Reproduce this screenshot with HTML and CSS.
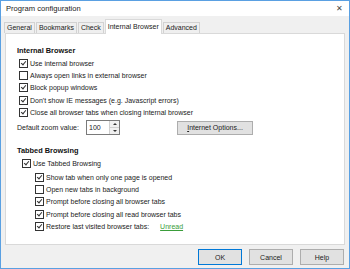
FILE: index.html
```html
<!DOCTYPE html>
<html lang="en">
<head>
    <meta charset="UTF-8">
    <title>Program configuration</title>
    <link rel="stylesheet" href="styles.css">
</head>
<body>
    <div class="window">
        <div class="titlebar">
            <span class="title">Program configuration</span>
            <span class="close">&#x2715;</span>
        </div>

        <div class="tabs">
            <span class="tab">General</span>
            <span class="tab">Bookmarks</span>
            <span class="tab">Check</span>
            <span class="tab active">Internal Browser</span>
            <span class="tab">Advanced</span>
        </div>

        <div class="panel">
            <h2>Internal Browser</h2>
            <div class="row"><span class="cb checked"></span>Use internal browser</div>
            <div class="row"><span class="cb"></span>Always open links in external browser</div>
            <div class="row"><span class="cb checked"></span>Block popup windows</div>
            <div class="row"><span class="cb checked"></span>Don't show IE messages (e.g. Javascript errors)</div>
            <div class="row"><span class="cb checked"></span>Close all browser tabs when closing internal browser</div>
            <div class="zoom-row">
                <span class="zoom-label">Default zoom value:</span>
                <span class="spin">
                    <span class="spin-value">100</span>
                    <span class="spin-btns">
                        <span class="arrow up"></span>
                        <span class="arrow down"></span>
                    </span>
                </span>
                <button class="btn options"><u>I</u>nternet Options...</button>
            </div>

            <h2 class="second">Tabbed Browsing</h2>
            <div class="row level1"><span class="cb checked"></span>Use Tabbed Browsing</div>
            <div class="sub">
                <div class="row"><span class="cb checked"></span>Show tab when only one page is opened</div>
                <div class="row"><span class="cb"></span>Open new tabs in background</div>
                <div class="row"><span class="cb checked"></span>Prompt before closing all browser tabs</div>
                <div class="row"><span class="cb checked"></span>Prompt before closing all read browser tabs</div>
                <div class="row"><span class="cb checked"></span>Restore last visited browser tabs:<a class="link">Unread</a></div>
            </div>
        </div>

        <div class="footer">
            <button class="btn default">OK</button>
            <button class="btn">Cancel</button>
            <button class="btn">Help</button>
        </div>
    </div>
</body>
</html>
```

FILE: styles.css
```css
body {
    margin: 0;
    padding: 0;
    font-family: "Liberation Sans", Arial, sans-serif;
    font-size: 7px;
    color: #1a1a1a;
}

.window {
    width: 350px;
    height: 269px;
    box-sizing: border-box;
    border: 1px solid #5aa0e2;
    background: #f0f0f0;
    display: flex;
    flex-direction: column;
}

.titlebar {
    height: 15px;
    background: #fff;
    display: flex;
    align-items: center;
    justify-content: space-between;
    padding: 0 6px 0 5px;
    flex-shrink: 0;
}

.title {
    font-size: 7.6px;
    color: #222;
}

.close {
    font-size: 8px;
    color: #444;
}

.tabs {
    display: flex;
    align-items: flex-end;
    padding: 0 0 0 3px;
    height: 17px;
    flex-shrink: 0;
    position: relative;
    z-index: 1;
}

.tab {
    height: 10px;
    line-height: 10px;
    padding: 0 2px;
    margin-right: 1px;
    border: 1px solid #d2d2d2;
    border-bottom: none;
    background: #efefef;
    color: #222;
}

.tab.active {
    height: 14px;
    line-height: 13px;
    background: #fff;
    border-color: #d9d9d9;
    margin-bottom: -1px;
}

.panel {
    margin: 0 4px;
    height: 212px;
    flex-shrink: 0;
    background: #fff;
    border: 1px solid #d9d9d9;
    padding: 11px 0 0 11px;
    box-sizing: border-box;
}

h2 {
    font-size: 7.4px;
    font-weight: bold;
    margin: 0;
    height: 12px;
    line-height: 12px;
    color: #111;
}

h2.second {
    margin-top: 9px;
}

.row {
    display: flex;
    align-items: center;
    height: 12.4px;
    padding-left: 2px;
    white-space: nowrap;
}

.cb {
    width: 7px;
    height: 7px;
    border: 1px solid #333;
    background: #fff;
    margin-right: 2px;
    position: relative;
    flex-shrink: 0;
}

.cb.checked::after {
    content: "";
    position: absolute;
    left: 2px;
    top: 0px;
    width: 2px;
    height: 4px;
    border: solid #333;
    border-width: 0 1px 1px 0;
    transform: rotate(40deg);
}

.zoom-row {
    display: flex;
    align-items: center;
    height: 16px;
    margin-top: 1px;
    white-space: nowrap;
}

.zoom-label {
    width: 69px;
    flex-shrink: 0;
}

.spin {
    display: flex;
    width: 32px;
    height: 13px;
    border: 1px solid #7a7a7a;
    background: #fff;
}

.spin-value {
    flex: 1;
    padding-left: 2px;
    line-height: 13px;
}

.spin-btns {
    width: 9px;
    display: flex;
    flex-direction: column;
    border-left: 1px solid #d0d0d0;
    background: #f0f0f0;
}

.arrow {
    flex: 1;
    display: flex;
    align-items: center;
    justify-content: center;
}

.arrow::after {
    content: "";
    border-left: 2px solid transparent;
    border-right: 2px solid transparent;
}

.arrow.up::after {
    border-bottom: 2px solid #333;
}

.arrow.down {
    border-top: 1px solid #d0d0d0;
}

.arrow.down::after {
    border-top: 2px solid #333;
}

.btn {
    font-family: inherit;
    font-size: 7px;
    color: #222;
    height: 14px;
    padding: 0;
    background: #e1e1e1;
    border: 1px solid #adadad;
}

.btn.options {
    margin-left: 57px;
    width: 76px;
}

.level1 {
    padding-left: 5px;
}

.sub {
    padding-left: 16px;
    margin-top: 2px;
}

.sub .row {
    height: 12.2px;
}

.link {
    margin-left: 11px;
    color: #3a9d3a;
    text-decoration: underline;
}

.footer {
    display: flex;
    justify-content: flex-end;
    gap: 7px;
    padding: 4px 5px 0 0;
}

.footer .btn {
    width: 44px;
    height: 16px;
}

.btn.default {
    border-color: #0078d7;
}
```
